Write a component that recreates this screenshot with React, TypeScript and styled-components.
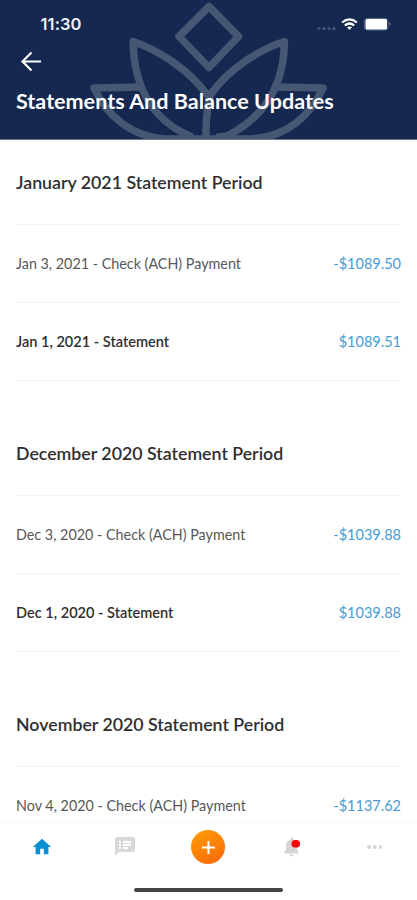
import React from "react";
import styled, { createGlobalStyle } from "styled-components";

const GlobalStyle = createGlobalStyle`
  * { box-sizing: border-box; }
  body { margin: 0; background: #fff; }
`;

const Screen = styled.div`
  display: flex;
  flex-direction: column;
  width: 417px;
  height: 900px;
  overflow: hidden;
  background: #fff;
  font-family: Lato, "Liberation Sans", sans-serif;
`;

const Header = styled.header`
  position: relative;
  flex: none;
  display: flex;
  flex-direction: column;
  height: 140px;
  padding: 0 16px;
  background: #15284f;
  border-bottom: 1px solid #6b7790;
  color: #fff;
  overflow: hidden;
`;

const Lotus = styled.svg`
  position: absolute;
  left: 0;
  top: 0;
`;

const StatusBar = styled.div`
  position: relative;
  display: flex;
  align-items: center;
  justify-content: space-between;
  height: 48px;
  padding: 0 9px 0 24.5px;
`;

const Clock = styled.span`
  font: 600 16.5px/20px Inter, sans-serif;
  letter-spacing: 0.1px;
  color: #eef2f8;
`;

const StatusIcons = styled.svg`
  display: block;
`;

const BackButton = styled.button`
  position: relative;
  display: flex;
  width: 24px;
  height: 24px;
  margin: 1px 0 0 3px;
  padding: 0;
  border: 0;
  background: none;
`;

const Title = styled.h1`
  position: relative;
  margin: 15px 0 0;
  font-size: 21.55px;
  line-height: 27px;
  font-weight: 700;
  white-space: nowrap;
`;

const Content = styled.main`
  flex: none;
  height: 682px;
  padding: 0 16px;
  overflow: hidden;
`;

const Period = styled.section`
  height: 271px;
`;

const PeriodTitle = styled.h2`
  display: flex;
  align-items: center;
  height: 85px;
  margin: 0;
  padding-bottom: 1px;
  border-bottom: 1px solid #f3f3f3;
  color: #2f2f2f;
  font-size: 17.75px;
  font-weight: 600;
  white-space: nowrap;
`;

const Row = styled.div<{ $strong?: boolean }>`
  display: flex;
  align-items: center;
  justify-content: space-between;
  height: 78px;
  border-bottom: 1px solid #f3f3f3;
  color: ${(p) => (p.$strong ? "#2f2f2f" : "#585858")};
  font-size: ${(p) => (p.$strong ? "14.55px" : "14.33px")};
  font-weight: ${(p) => (p.$strong ? 600 : 400)};
  white-space: nowrap;
`;

const Amount = styled.span`
  color: #479bd6;
  font-size: 14.5px;
  font-weight: 400;
`;

const TabBar = styled.nav`
  flex: none;
  display: grid;
  grid-template-columns: repeat(5, 1fr);
  height: 52px;
  padding-bottom: 3px;
  border-top: 1px solid #f8f8f8;
`;

const Tab = styled.button`
  display: flex;
  align-items: center;
  justify-content: center;
  padding: 0;
  border: 0;
  background: none;
`;

const AddCircle = styled.span`
  display: flex;
  width: 34px;
  height: 34px;
  border-radius: 50%;
  background: linear-gradient(150deg, #ff9f05, #fb6508);
`;

const HomeIndicator = styled.div`
  align-self: center;
  width: 149px;
  height: 4px;
  margin-top: 14px;
  border-radius: 2px;
  background: #454545;
`;

const periods = [
  {
    title: "January 2021 Statement Period",
    rows: [
      { label: "Jan 3, 2021 - Check (ACH) Payment", amount: "-$1089.50" },
      { label: "Jan 1, 2021 - Statement", amount: "$1089.51", strong: true },
    ],
  },
  {
    title: "December 2020 Statement Period",
    rows: [
      { label: "Dec 3, 2020 - Check (ACH) Payment", amount: "-$1039.88" },
      { label: "Dec 1, 2020 - Statement", amount: "$1039.88", strong: true },
    ],
  },
  {
    title: "November 2020 Statement Period",
    rows: [{ label: "Nov 4, 2020 - Check (ACH) Payment", amount: "-$1137.62", strong: false }],
  },
];

export default function App() {
  return (
    <Screen>
      <GlobalStyle />
      <Header>
        <Lotus width="417" height="140" viewBox="0 0 417 140" fill="none" stroke="#465774" strokeWidth="7.500" strokeLinejoin="round" strokeLinecap="round">
          <path d="M209 6.500 L238.500 36.500 L209 67.500 L179 36.500Z" />
          <path d="M208 96 C189 69 158 50 133 41.500 C134 82 149 119 190 136" />
          <path d="M141 87 L94 88 C106 115 132 138 168 139 L250 139 C286 138 311 115 323 88 L276 87" />
          <path d="M206 137 C206 116 207 104 211 94 C228 70 258 50 284.500 41.500 C284 82 267 116 227 136 L219 137" />
        </Lotus>
        <StatusBar>
          <Clock>11:30</Clock>
          <StatusIcons width="76" height="20" viewBox="0 0 76 20" fill="none">
            <g fill="#465777">
              <circle cx="3" cy="14.500" r="1.6" />
              <circle cx="8" cy="14.500" r="1.6" />
              <circle cx="13" cy="14.500" r="1.6" />
              <circle cx="18" cy="14.500" r="1.6" />
            </g>
            <g stroke="#fff" strokeWidth="2.2">
              <path d="M26.100 8.500 Q33.500 2.300 40.900 8.500" />
              <path d="M28.800 11.500 Q33.500 7.500 38.200 11.500" />
            </g>
            <path d="M31 13.300 Q33.500 11.500 36 13.300 L33.500 16Z" fill="#fff" />
            <rect x="48.500" y="4.500" width="23.500" height="11.500" rx="3" stroke="#586884" />
            <rect x="49.500" y="5" width="21.500" height="10.500" rx="1.500" fill="#fff" />
            <path d="M73.500 8 Q75.500 10 73.500 12Z" fill="#8490a6" />
          </StatusIcons>
        </StatusBar>
        <BackButton aria-label="Back">
          <svg width="24" height="24" viewBox="0 0 24 24" fill="none" stroke="#fff" strokeWidth="2.200">
            <path d="M22 12.500H3.500M12.500 3.500L3.500 12.500L12.500 21.500" />
          </svg>
        </BackButton>
        <Title>Statements And Balance Updates</Title>
      </Header>
      <Content>
        {periods.map((period) => (
          <Period key={period.title}>
            <PeriodTitle>{period.title}</PeriodTitle>
            {period.rows.map((row) => (
              <Row key={row.label} $strong={row.strong}>
                <span>{row.label}</span>
                <Amount>{row.amount}</Amount>
              </Row>
            ))}
          </Period>
        ))}
      </Content>
      <TabBar>
        <Tab aria-label="Home">
          <svg width="22" height="22" viewBox="0 0 24 24" fill="#0990d4">
            <path d="M10 20v-6h4v6h5v-8h3L12 3 2 12h3v8z" />
          </svg>
        </Tab>
        <Tab aria-label="Messages">
          <svg width="24" height="24" viewBox="0 0 24 24" fill="#d8d8d8">
            <path d="M20 2H4c-1.100 0-2 .9-2 2v17l4-4h14c1.100 0 2-.9 2-2V4c0-1.100-.9-2-2-2zM8 14H6v-2h2v2zm0-3H6V9h2v2zm0-3H6V6h2v2zm7 6h-5v-2h5v2zm3-3h-8V9h8v2zm0-3h-8V6h8v2z" />
          </svg>
        </Tab>
        <Tab aria-label="Add">
          <AddCircle>
            <svg width="34" height="34" viewBox="0 0 34 34" stroke="#fff" strokeWidth="2">
              <path d="M17.500 11V24M11 17.500H24" />
            </svg>
          </AddCircle>
        </Tab>
        <Tab aria-label="Notifications">
          <svg width="20" height="24" viewBox="0 0 20 24">
            <path d="M2 18.500V17l2-2V10.500a6 6 0 0 1 4.500-5.700V4a1.500 1.500 0 0 1 3 0v.8A6 6 0 0 1 15 10.500V15l1.500 2v1.500zM7.500 19.500h4a2 2 0 0 1-4 0z" fill="#d6d6d6" />
            <rect x="9.500" y="5" width="8.500" height="7.500" rx="3.500" fill="#fb0008" />
          </svg>
        </Tab>
        <Tab aria-label="More">
          <svg width="18" height="6" viewBox="0 0 18 6" fill="#d6d6d6">
            <circle cx="3" cy="3" r="1.900" />
            <circle cx="8.800" cy="3" r="1.900" />
            <circle cx="14.600" cy="3" r="1.900" />
          </svg>
        </Tab>
      </TabBar>
      <HomeIndicator />
    </Screen>
  );
}
